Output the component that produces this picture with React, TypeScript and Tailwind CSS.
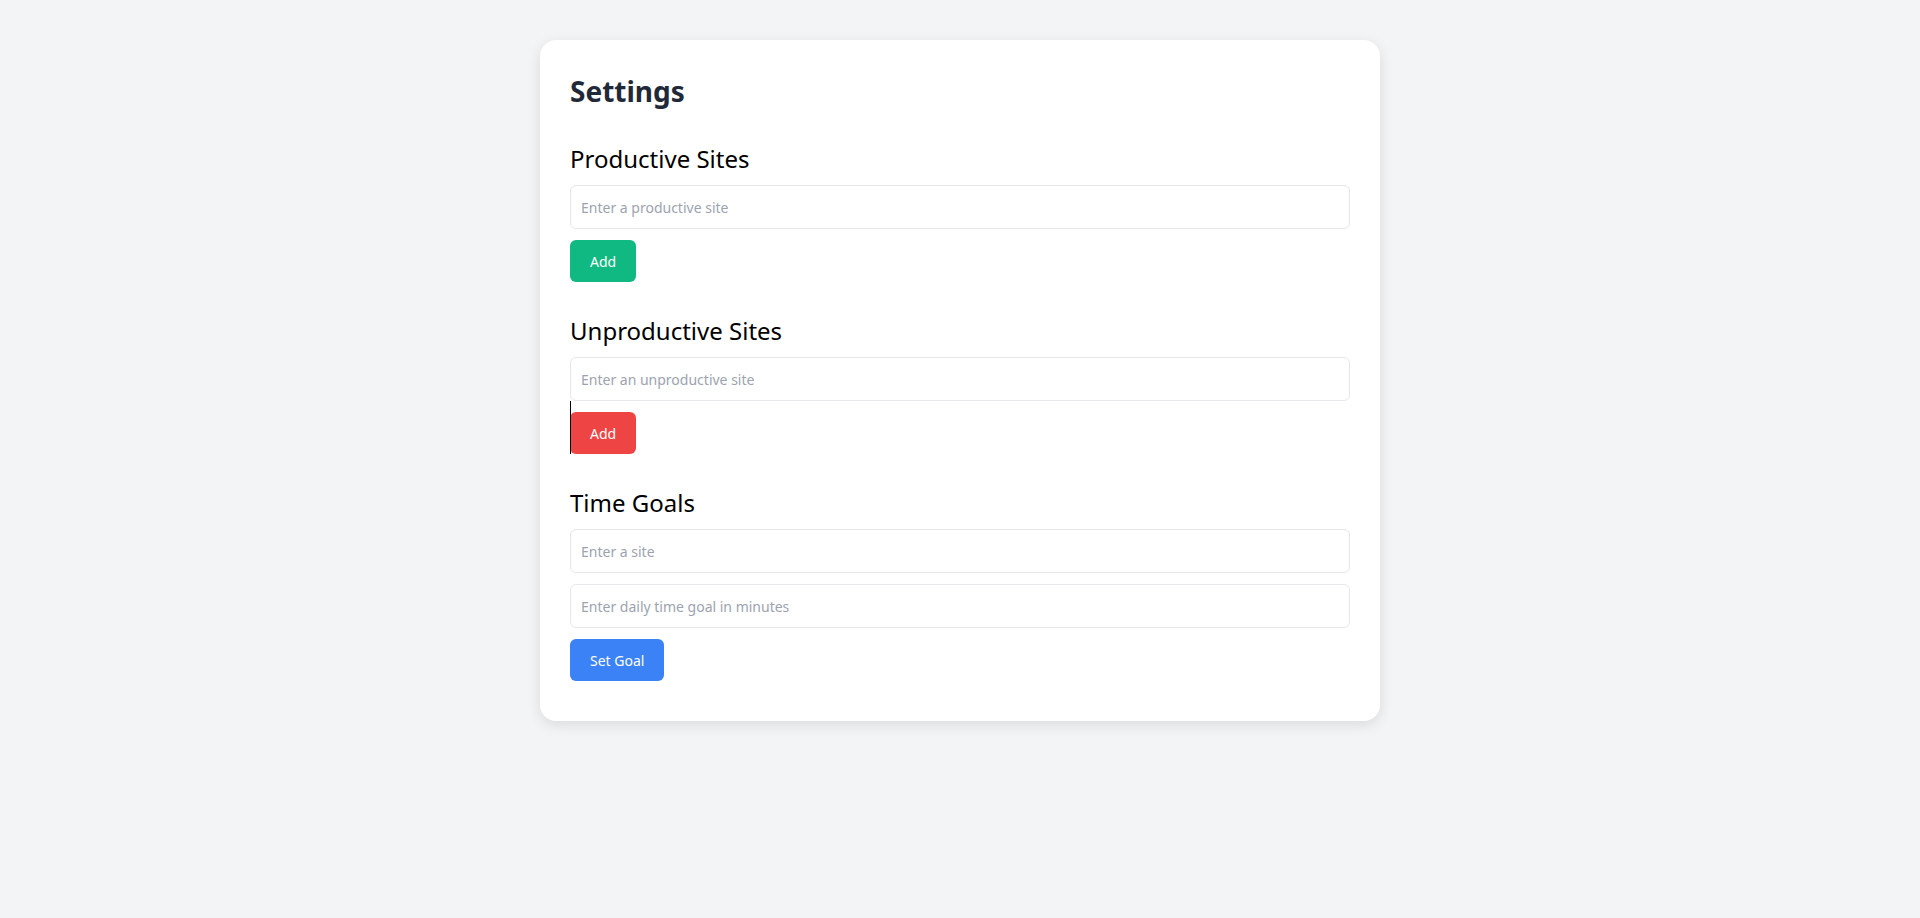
export default function App() {
  const font = { fontFamily: '"Noto Sans", "Segoe UI", sans-serif' };
  const inputCls =
    "block h-[44px] w-full self-stretch rounded-md border border-[#e5e7eb] bg-white px-[10px] text-[14px] text-gray-800 outline-none placeholder:text-[#9ca3af]";
  return (
    <div className="min-h-[918px] w-full bg-[#f3f4f6] pt-10" style={font}>
      <div className="mx-auto flex w-[840px] flex-col items-start rounded-2xl bg-white px-[30px] pb-[40px] pt-[31px] shadow-[0_4px_14px_rgba(0,0,0,0.1)]">
        <h1 className="mb-[32px] text-[28px] font-bold leading-[40px] text-[#1f2937]">Settings</h1>

        <h2 className="mb-[10px] text-[24px] leading-[32px] text-black">Productive Sites</h2>
        <input className={inputCls} placeholder="Enter a productive site" />
        <button className="mt-[11px] h-[42px] rounded-md bg-[#10b981] px-5 text-[14px] text-white">Add</button>

        <h2 className="mb-[10px] mt-[33px] text-[24px] leading-[32px] text-black">Unproductive Sites</h2>
        <input className={inputCls} placeholder="Enter an unproductive site" />
        <div className="relative mt-[11px]">
          <button className="block h-[42px] rounded-md bg-[#ef4444] px-5 text-[14px] text-white">Add</button>
          <div className="absolute left-0 top-[-11px] h-[53px] w-px bg-black" />
        </div>

        <h2 className="mb-[10px] mt-[33px] text-[24px] leading-[32px] text-black">Time Goals</h2>
        <input className={inputCls} placeholder="Enter a site" />
        <input className={`mt-[11px] ${inputCls}`} placeholder="Enter daily time goal in minutes" />
        <button className="mt-[11px] h-[42px] rounded-md bg-[#3b82f6] px-5 text-[14px] text-white">Set Goal</button>
      </div>
    </div>
  );
}
